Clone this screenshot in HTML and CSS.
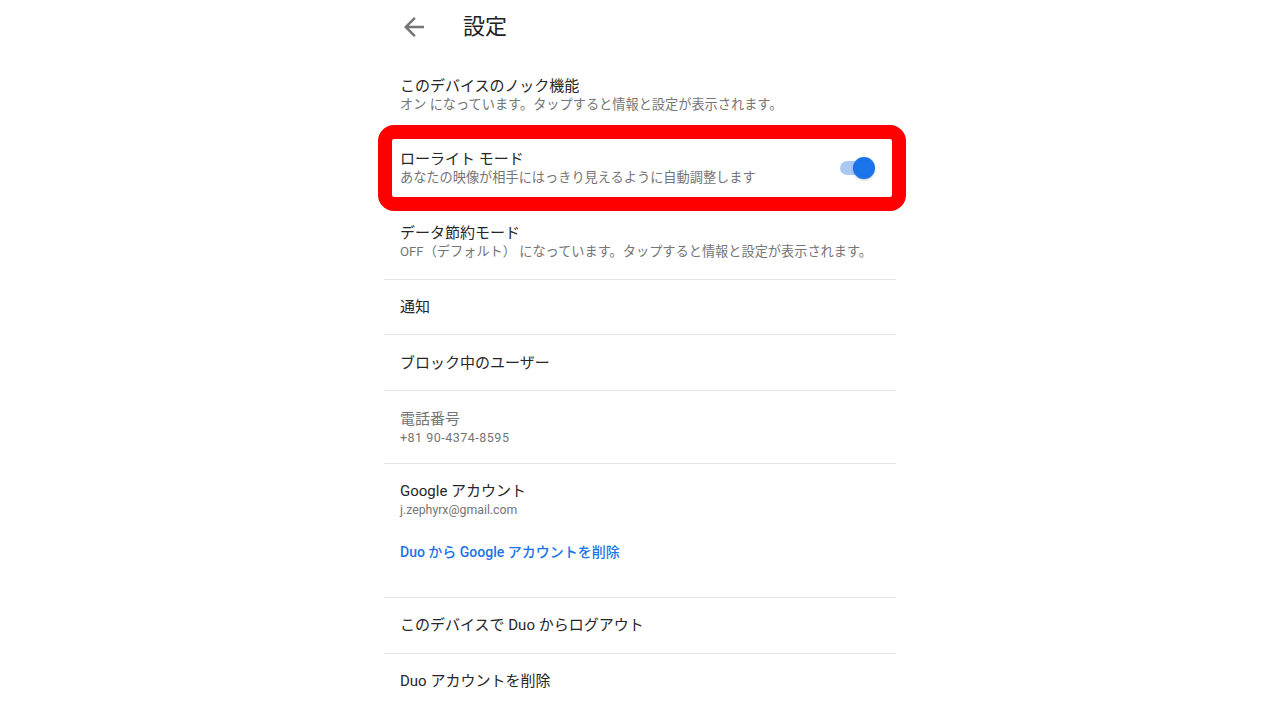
FILE: index.html
```html
<!DOCTYPE html>
<html lang="ja">
<head>
    <meta charset="UTF-8">
    <meta name="viewport" content="width=device-width, initial-scale=1.0">
    <title>設定</title>
    <link rel="stylesheet" href="styles.css">
</head>
<body>

<div class="settings">
    <div class="header">
        <svg class="back" viewBox="4 4 16 16" width="20" height="20">
            <path d="M20 11H7.83l5.59-5.59L12 4l-8 8 8 8 1.41-1.41L7.83 13H20v-2z" fill="#757575"/>
        </svg>
        <div class="header-title">設定</div>
    </div>

    <div class="item item-knock">
        <div class="title">このデバイスのノック機能</div>
        <div class="sub">オン になっています。タップすると情報と設定が表示されます。</div>
    </div>

    <div class="item item-lowlight">
        <div class="text">
            <div class="title">ローライト モード</div>
            <div class="sub">あなたの映像が相手にはっきり見えるように自動調整します</div>
        </div>
        <div class="toggle">
            <div class="track"></div>
            <div class="thumb"></div>
        </div>
    </div>

    <div class="item item-data divided">
        <div class="title">データ節約モード</div>
        <div class="sub">OFF（デフォルト） になっています。タップすると情報と設定が表示されます。</div>
    </div>

    <div class="item single divided">
        <div class="title">通知</div>
    </div>

    <div class="item single divided row-block">
        <div class="title">ブロック中のユーザー</div>
    </div>

    <div class="item item-phone divided">
        <div class="title muted">電話番号</div>
        <div class="sub phone">+81 90-4374-8595</div>
    </div>

    <div class="item item-account divided">
        <div class="title">Google アカウント</div>
        <div class="email">j.zephyrx@gmail.com</div>
        <div class="link">Duo から Google アカウントを削除</div>
    </div>

    <div class="item single divided row-logout">
        <div class="title">このデバイスで Duo からログアウト</div>
    </div>

    <div class="item single">
        <div class="title">Duo アカウントを削除</div>
    </div>
</div>

</body>
</html>
```

FILE: styles.css
```css
body {
    margin: 0;
    background-color: #ffffff;
    font-family: Roboto, "Noto Sans CJK JP", sans-serif;
    color: #212121;
}
.settings {
    width: 512px;
    margin: 0 auto;
}
.header {
    height: 53px;
    display: flex;
    align-items: center;
    padding-left: 20px;
}
.back {
    display: block;
}
.header-title {
    margin-left: 39px;
    font-size: 22px;
    line-height: 30px;
    color: #212121;
}
.item {
    padding-left: 16px;
}
.title {
    font-size: 15px;
    line-height: 20px;
    color: #262626;
}
.title.muted {
    color: #757575;
}
.sub {
    font-size: 13.2px;
    line-height: 18px;
    color: #757575;
}
.sub.phone {
    font-size: 12.5px;
    letter-spacing: 0.5px;
}
.divided {
    border-bottom: 1px solid #e6e6e6;
}
.item-knock {
    padding-top: 23px;
    padding-bottom: 11px;
}
.item-lowlight {
    display: flex;
    align-items: center;
    margin: 0 -10px 0 -6px;
    padding: 10px 17px 10px 8px;
    border: 14px solid #ff0000;
    border-radius: 16px;
}
.item-lowlight .text {
    flex: 1;
}
.toggle {
    position: relative;
    width: 35px;
    height: 22px;
}
.track {
    position: absolute;
    left: 0;
    top: 4px;
    width: 30px;
    height: 14px;
    border-radius: 7px;
    background-color: #aac8f4;
}
.thumb {
    position: absolute;
    right: 0;
    top: 0;
    width: 22px;
    height: 22px;
    border-radius: 50%;
    background-color: #1a73e8;
    box-shadow: 0 1px 2px rgba(0, 0, 0, 0.25);
}
.item-data {
    padding-top: 12px;
    padding-bottom: 18px;
}
.single {
    padding-top: 17px;
    padding-bottom: 17px;
}
.row-block {
    padding-top: 18px;
}
.item-phone {
    padding-top: 18px;
    padding-bottom: 16px;
}
.item-account {
    padding-top: 17px;
    padding-bottom: 35px;
}
.email {
    font-size: 12.3px;
    line-height: 18px;
    color: #757575;
}
.link {
    margin-top: 23px;
    font-size: 14px;
    line-height: 20px;
    font-weight: 500;
    color: #1a73e8;
}
.row-logout {
    padding-bottom: 18px;
}
```
